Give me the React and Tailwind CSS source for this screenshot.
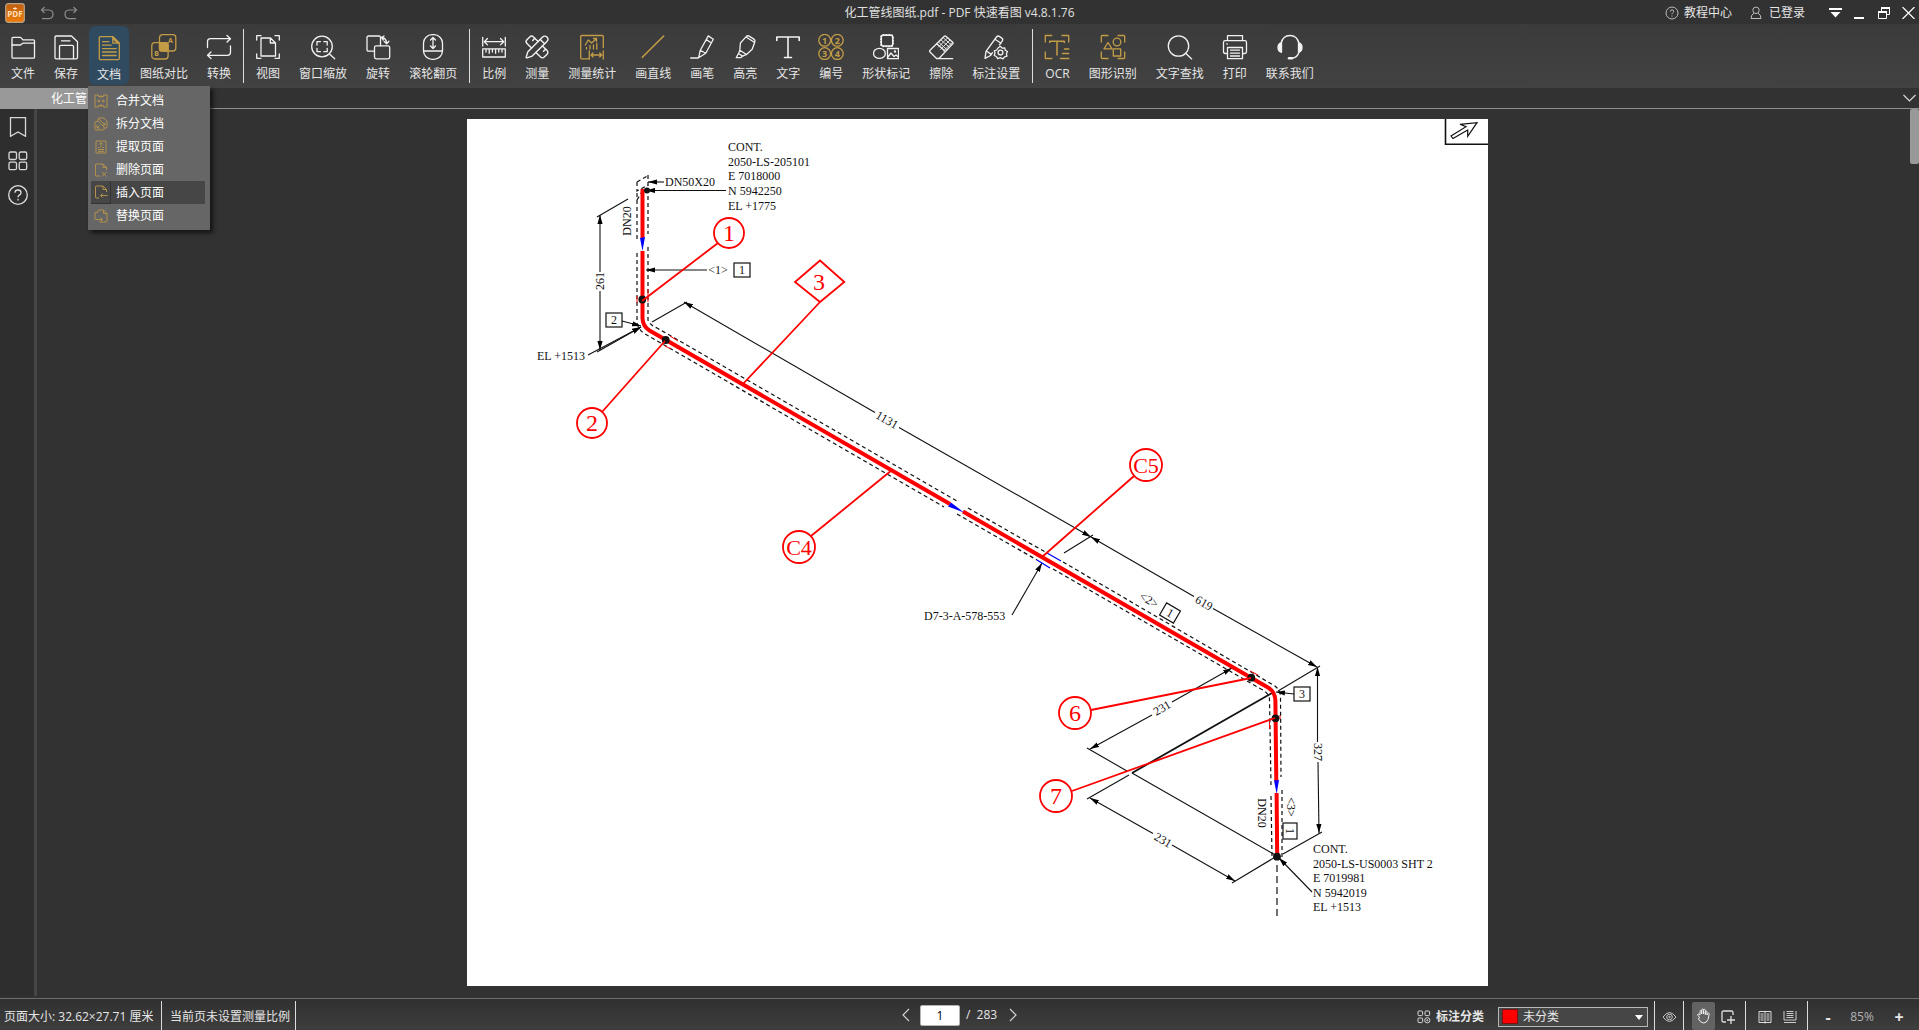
import React from "react";
import { PencilRuler } from "lucide-react";

const GOLD = "#c39c46";

function Icon({ children, color = "#f2f2f2" }) {
  return (
    <svg
      viewBox="0 0 26 26"
      className="h-[26px] w-[26px]"
      fill="none"
      stroke={color}
      strokeWidth="1.3"
      strokeLinecap="round"
      strokeLinejoin="round"
      aria-hidden="true"
    >
      {children}
    </svg>
  );
}

const icons = {
  folder: (
    <Icon>
      <path d="M2 23.2V4.3q0-1 1-1h7.2q.6 0 1 .6l1.6 2h10.700q1 0 1 1v16.300q0 1-1 1H3q-1 0-1-1z" />
      <path d="M2 11h8.500l2.300-1.800h11.700" />
    </Icon>
  ),
  save: (
    <Icon>
      <path d="M3.200 2H18.500l6 5.800V23.500q0 1.300-1.300 1.300H3.200q-1.200 0-1.200-1.200V3.200Q2 2 3.200 2z" />
      <path d="M6.500 24.500V12.500q0-1.200 1.200-1.200h11.600q1.200 0 1.200 1.200v12M8.500 6.800H17" />
    </Icon>
  ),
  doc: (
    <Icon color={GOLD}>
      <path d="M4.500 1.700H17l6.300 6.300v15.300q0 1.300-1.300 1.300H4.500q-1.200 0-1.200-1.200V3q0-1.300 1.200-1.300z" />
      <path d="M16.800 1.900v6.200h6.200zM17.500 4l4 4" />
      <path d="M6.500 6.700h6.300M6.500 10.200h8.700M6.500 13.600h13.700M6.500 17h13.700M6.500 20.500h13.700" />
    </Icon>
  ),
  compare: (
    <Icon color={GOLD}>
      <rect x="8.500" y=".7" width="16.300" height="16.300" rx="3" />
      <rect x=".8" y="8.700" width="16.300" height="16.300" rx="3" />
      <rect x="8.500" y="8.700" width="8.600" height="8.300" rx="2" fill={GOLD} />
      <text x="19.500" y="8.600" fontSize="7" fontWeight="700" textAnchor="middle" fill={GOLD} stroke="none">A</text>
      <text x="5.600" y="22" fontSize="7" fontWeight="700" textAnchor="middle" fill={GOLD} stroke="none">B</text>
    </Icon>
  ),
  convert: (
    <Icon>
      <path d="M1.500 13.500V7.700q0-3 3-3H24M21 1.500l3.500 3.200L21 8M24.500 12v6.300q0 3-3 3H2M5 18l-3.500 3.300L5 24.500" />
    </Icon>
  ),
  view: (
    <Icon>
      <path d="M1.700 6V1.700H6M20 1.700h4.300V6M24.300 20v4.300H20M6 24.300H1.700V20" />
      <path d="M6 4h9.500l5 5v13H6zM15.300 4.300V9h5" />
    </Icon>
  ),
  zoomWindow: (
    <Icon>
      <circle cx="12" cy="12.500" r="10.300" />
      <path d="M19.500 20l5.200 4.800M7 11V7.600h3.400M13.800 7.600h3.400V11M17.200 14.300v3.400h-3.400M10.400 17.700H7v-3.400" />
    </Icon>
  ),
  rotate: (
    <Icon>
      <path d="M9.500 17.200H3.600q-1.600 0-1.600-1.600V3.600Q2 2 3.600 2h10.300q1.600 0 1.600 1.600v8" />
      <rect x="9.500" y="11.800" width="15.200" height="13" rx="1.700" />
      <path d="M16.500 3.500q5 .5 5.200 6M19 2l-2.500 1.500L18.300 6M19.200 7.500l2.500 2.200 2.200-2.500" />
    </Icon>
  ),
  wheel: (
    <Icon>
      <rect x="3.500" y=".7" width="19" height="24.600" rx="8.500" />
      <path d="M3.500 17h19M13 3.500v11M10.500 6L13 3.500 15.500 6M10.500 12l2.500 2.500 2.500-2.500" />
    </Icon>
  ),
  ratio: (
    <Icon>
      <path d="M1.700 3.300V12M24.300 3.300V12M3.500 7.700h19M6.500 4.500L3.300 7.700l3.200 3.200M19.500 4.500l3.200 3.200-3.200 3.200" />
      <path d="M1.700 14.800h22.600v8.200H1.700zM5 15v3M8.200 15v4.300M11.400 15v3M14.600 15v4.300M17.800 15v3M21 15v3" />
    </Icon>
  ),
  measure: <PencilRuler className="h-[26px] w-[26px] text-[#f2f2f2]" strokeWidth={1.3} aria-hidden="true" />,
  stats: (
    <Icon color={GOLD}>
      <path d="M24.300 13.500V2.500q0-1-1-1H2.700q-1 0-1 1v21.300q0 1 1 1H10" />
      <path d="M6.300 11L9.300 6l3.300 3 4.700-4.300M14.500 4.500h3v3M7.500 13.500V15M11 11.500V15M14.500 11V15M17.800 9.500V15" />
      <path d="M10.300 17v8M24.300 17v8M12 21h10.700M14 19l-2 2 2 2M20.700 19l2 2-2 2" />
    </Icon>
  ),
  line: (
    <Icon color={GOLD}>
      <path d="M2.300 23.300L23.700 2" strokeWidth="1.600" />
    </Icon>
  ),
  pen: (
    <Icon>
      <path d="M1.700 24h7.500L16.800 19.200l7.500-14-5-3.300-8 14.300-1.600 7.500M11.300 16.200l5.400 3M17.200 5.600l5 3.200" />
    </Icon>
  ),
  highlight: (
    <Icon>
      <path d="M14.200 2.600q1.100-1.400 3-.5l4.700 3q1.500 1 .9 2.900l-2.600 7.200-5.700 5.300-6.700-4.200.6-7.300zM8 16.300l-1.500 3.200 4.200 2.600 3.700-1.700M6.500 19.500l-2.300 4.200h4.500l2-1.600M14 3l8.300 5.200" />
    </Icon>
  ),
  text: (
    <Icon>
      <path d="M1.800 6.500V3h22.400v3.500M13 3v20.300M9.500 23.500h7" strokeWidth="1.600" />
    </Icon>
  ),
  number: (
    <Icon color={GOLD}>
      {[[6.700, 6.300, 1], [19.300, 6.300, 2], [6.700, 19.600, 3], [19.300, 19.600, 4]].map(([x, y, n]) => (
        <g key={n}>
          <circle cx={x} cy={y} r="5.900" />
          <text x={x} y={y + 3.300} fontSize="9" fontWeight="700" textAnchor="middle" fill={GOLD} stroke="none">{n}</text>
        </g>
      ))}
    </Icon>
  ),
  shapes: (
    <Icon>
      <rect x="8.300" y="1.200" width="11.400" height="10.800" rx="2" strokeWidth="1.500" />
      <rect x="7.800" y=".7" width="12.400" height="11.800" rx="2.500" strokeWidth="1.500" strokeDasharray=".5 2.400" />
      <ellipse cx="6.400" cy="19.400" rx="5.900" ry="5" />
      <path d="M14.500 14.500h11v10.200h-11zM15 23l3-4 3 3.500 2-1.500 2.300 2" />
      <circle cx="22" cy="17.500" r=".6" />
    </Icon>
  ),
  eraser: (
    <Icon>
      <path d="M2 16.300L16.300 2.300q.8-.7 1.600 0l6.800 6q.8.800 0 1.600L11 24.500H8.500L2 18q-.8-.8 0-1.700zM9 24.700h15.700M8.700 9.800l8.800 7.800" />
      <path d="M11 8.500l7.800 7M13.300 6.200l8 7M15.500 4l8 7M19.500 4L10.500 13M22 6l-9.300 9.300M24.300 8.500L15.500 17" strokeWidth=".9" />
    </Icon>
  ),
  settings: (
    <Icon>
      <path d="M2 24.300l1-7L13.500 3q1.200-1.600 2.800-.6l2.500 1.700q1.600 1.200.5 2.800L16.500 10.800M2 24.300l5.500-2.800 2-2.800M3.300 17l5 3.400M12 5.200l6 4" />
      <path d="M17.300 12.300l1.800 1.800 2.500-.3.700 2.400 2.200 1.300-1.100 2.300.6 2.400-2.400.6-1.600 2-2.700-1.100-2.600 1-1.300-2.200-2.200-1 .8-2.400-.7-2.300 2.400-.8 1.300-2z" />
      <circle cx="17.500" cy="18.600" r="2.400" />
    </Icon>
  ),
  ocr: (
    <Icon color={GOLD}>
      <path d="M1.300 8.500v-7h7M17.500 1.500h7.200v7M1.300 17.500v7h7" strokeLinecap="butt" />
      <path d="M5.700 8.500V7.300h14.600v1.200M13 7.300V21M20.500 15h4.200M18.500 19.500h6.200M16.500 24.400h8.200" strokeWidth="1.500" />
    </Icon>
  ),
  recognise: (
    <Icon color={GOLD}>
      <path d="M1.300 8V2.500q0-1 1-1H8M18 1.500h5.700q1 0 1 1V8M24.700 18v5.500q0 1-1 1H18M8 24.500H2.300q-1 0-1-1V18" />
      <path d="M8 8.500l4 6.300H4zM13.300 14.800h7.400V22h-7.400z" />
      <circle cx="17" cy="8" r="3.800" />
    </Icon>
  ),
  search: (
    <Icon>
      <circle cx="11.500" cy="12" r="10.200" />
      <path d="M18.700 19.300l6 5.600" />
    </Icon>
  ),
  print: (
    <Icon>
      <path d="M5.500 6.500V1.700h15v4.800M5.500 19.500H3.300q-1.800 0-1.800-1.800V8.500q0-1.800 1.800-1.800h19.400q1.800 0 1.800 1.800v9.200q0 1.800-1.800 1.800h-2.200M5.500 13.500h15v11.200h-15zM8.500 16.200h9M8.500 19.200h9M8.500 22h9M4.800 10h.5" />
    </Icon>
  ),
  headset: (
    <Icon>
      <path d="M4 9.500q1.800-8 9-8t9 8M22 18q-1.500 5.500-7 6.200" />
      <path d="M4.500 8.500v9.800q-3.500-1-3.500-4.900t3.500-4.900zM21.500 8.500v9.800q3.500-1 3.500-4.900t-3.500-4.900z" fill="#f2f2f2" />
      <path d="M12 24.200h3" strokeWidth="2.500" />
    </Icon>
  ),
};

const groups = [
  [["文件", "folder"], ["保存", "save"], ["文档", "doc"], ["图纸对比", "compare"], ["转换", "convert"]],
  [["视图", "view"], ["窗口缩放", "zoomWindow"], ["旋转", "rotate"], ["滚轮翻页", "wheel"]],
  [
    ["比例", "ratio"], ["测量", "measure"], ["测量统计", "stats"], ["画直线", "line"], ["画笔", "pen"], ["高亮", "highlight"],
    ["文字", "text"], ["编号", "number"], ["形状标记", "shapes"], ["擦除", "eraser"], ["标注设置", "settings"],
  ],
  [["OCR", "ocr"], ["图形识别", "recognise"], ["文字查找", "search"], ["打印", "print"], ["联系我们", "headset"]],
];

const menuItems = [
  ["合并文档", "M4.500 1H1v4M9.500 1H13v4M4.500 13H1V9M9.500 13H13V9M7 1v3M7 10v3M1 5v4M13 5v4M3 7h3M8 7h3M4.500 5.500L6 7 4.500 8.500M9.500 5.500L8 7l1.500 1.500M4.500 1v1.500h5V1M4.500 13v-1.500h5V13"],
  ["拆分文档", "M4 4V2q0-1 1-1h5l3 3v6q0 1-1 1h-2M1 5.500q0-1 1-1h2.500L10 10v2q0 1-1 1H2q-1 0-1-1zM5 2l6 6M11 5.500V8H8.500M3 8v3h3M3 11l2.500-2.500"],
  ["提取页面", "M2 1h10v12H2zM7 2.500v5M5 4.500l2-2 2 2M4 7.500h1.500M8.500 7.500H10M4 9.500h6M4 11.300h6"],
  ["删除页面", "M6 13H2.500q-1 0-1-1V2q0-1 1-1H9l3.500 3.500V7M9 1v3.500h3.500M8 9l4.500 4.500M12.500 9L8 13.500"],
  ["插入页面", "M5 13H2.500q-1 0-1-1V2q0-1 1-1H9l3.500 3.500V7M9 1v3.500h3.500M13.500 10.500H6.500M8.500 8.500l-2 2 2 2"],
  ["替换页面", "M4 3.500V2q0-1 1-1h4.500L13 4.500V12q0 1-1 1H6.500q-1 0-1-1M3.500 3.500H1v6q0 1 1 1h6M6.500 8.500l2 2-2 2M9.500 1v3.500H13"],
];

function DocMenu() {
  return (
    <div
      role="menu"
      className="absolute top-[60px] -left-px z-20 flex w-[122px] flex-col bg-[#666666] py-[3px] pr-[5px] pl-[3px] shadow-[3px_3px_4px_rgba(0,0,0,0.6)]"
    >
      {menuItems.map(([label, d], i) => (
        <button
          key={label}
          role="menuitem"
          className={
            i === 4
              ? "flex h-[23px] items-center bg-[#464646] text-left text-white"
              : "flex h-[23px] items-center text-left text-white"
          }
        >
          <span
            className={
              i === 4
                ? "flex h-full w-5 items-center justify-center border-r border-b border-[#333333]"
                : "flex h-full w-5 items-center justify-center"
            }
          >
            <svg viewBox="0 0 14 14" className="h-3.5 w-3.5" fill="none" stroke="#b3914b" strokeWidth="1" aria-hidden="true">
              <path d={d} />
            </svg>
          </span>
          <span className="pl-[5px]">{label}</span>
        </button>
      ))}
    </div>
  );
}

function TitleBar() {
  return (
    <header className="grid h-6 grid-cols-[1fr_auto_1fr] items-center bg-[#323232] pt-px">
      <div className="flex items-center pl-[5px]">
        <svg viewBox="0 0 20 20" className="h-5 w-5" role="img" aria-label="PDF">
          <defs>
            <linearGradient id="logo" x1="0" y1="0" x2="0" y2="1">
              <stop offset="0" stopColor="#c05f10" />
              <stop offset="1" stopColor="#ee7c0a" />
            </linearGradient>
          </defs>
          <rect x=".7" y=".7" width="18.600" height="18.600" rx="2.500" fill="url(#logo)" stroke="#b9a389" strokeWidth="1.200" />
          <text x="10" y="14" fontSize="8" fontWeight="700" textAnchor="middle" fill="#ffe0bd">PDF</text>
          <path d="M10 4v3M8 5.500h4" stroke="#ffe0bd" />
        </svg>
        <button aria-label="撤销" className="ml-[15px]">
          <svg viewBox="0 0 14 14" className="h-3.5 w-3.5" fill="none" stroke="#8c8c8c" strokeWidth="1.200">
            <path d="M4.500 1L1.500 4l3 3M1.500 4H9q4 .2 4 4.300T9 12.700H2" />
          </svg>
        </button>
        <button aria-label="重做" className="ml-2.5">
          <svg viewBox="0 0 14 14" className="h-3.5 w-3.5" fill="none" stroke="#8c8c8c" strokeWidth="1.200">
            <path d="M9.500 1l3 3-3 3M12.500 4H5Q1 4.200 1 8.300t4 4.400h7" />
          </svg>
        </button>
      </div>
      <h1 className="text-[#e0e0e0]">化工管线图纸.pdf - PDF 快速看图 v4.8.1.76</h1>
      <div className="flex items-center justify-end pr-1 text-[#e6e6e6]">
        <button className="mr-[18px] flex items-center gap-[5px]">
          <svg viewBox="0 0 14 14" className="h-3.5 w-3.5" fill="none" stroke="#bdbdbd" aria-hidden="true">
            <circle cx="7" cy="7" r="6" />
            <path d="M5.300 5.600q0-1.800 1.700-1.800t1.700 1.600q0 1-1 1.600-.7.400-.7 1.300M7 9.600v1" />
          </svg>
          教程中心
        </button>
        <button className="mr-6 flex items-center gap-[7px]">
          <svg viewBox="0 0 12 14" className="h-3.5 w-3" fill="none" stroke="#bdbdbd" aria-hidden="true">
            <circle cx="6" cy="4.300" r="3.200" />
            <path d="M4 7.200Q1 8.500 1 12.500h10q0-4-3-5.300" />
          </svg>
          已登录
        </button>
        <button aria-label="菜单" className="mr-3">
          <svg viewBox="0 0 13 12" className="h-3 w-[13px]" fill="#ffffff"><path d="M0 1h13v2H0zM1.500 5h10L6.500 10.500z" /></svg>
        </button>
        <button aria-label="最小化" className="mr-3.5">
          <svg viewBox="0 0 10 12" className="h-3 w-2.5" fill="#ffffff"><path d="M0 10h10v2H0z" /></svg>
        </button>
        <button aria-label="还原" className="mr-3">
          <svg viewBox="0 0 12 12" className="h-3 w-3" fill="none" stroke="#ffffff">
            <path d="M3.500 4V1h8v6.500H9M.5 5h8v6.500h-8z" /><path d="M3 1h9M0 5h9" strokeWidth="2" />
          </svg>
        </button>
        <button aria-label="关闭">
          <svg viewBox="0 0 13 12" className="h-3 w-[13px]" fill="none" stroke="#ffffff" strokeWidth="1.200"><path d="M.5 0l12 12M12.500 0L.5 12" /></svg>
        </button>
      </div>
    </header>
  );
}

function ToolButton({ label, icon }) {
  const active = icon === "doc";
  return (
    <div className="relative">
      <button
        aria-haspopup={active ? "menu" : undefined}
        className={
          active
            ? "flex h-[59px] flex-col items-center rounded-md bg-[#304a5f] px-2 pt-[9px] text-[#e6e6e6]"
            : "flex h-[59px] flex-col items-center px-2 pt-2 text-[#e6e6e6]"
        }
      >
        <span className="-mx-2">{icons[icon]}</span>
        <span className="mt-1.5 leading-4 whitespace-nowrap">{label}</span>
      </button>
      {active && <DocMenu />}
    </div>
  );
}

function Toolbar() {
  return (
    <nav className="flex h-16 bg-[linear-gradient(#3b3b3b,#424242)] pt-0.5 pl-[3px]">
      {groups.map((group, g) => (
        <React.Fragment key={g}>
          {g > 0 && <div className="mx-1 mt-[3px] h-[54px] w-px bg-[#dcdcdc]" />}
          <div className="flex gap-[3px]">
            {group.map(([label, icon]) => (
              <ToolButton key={label} label={label} icon={icon} />
            ))}
          </div>
        </React.Fragment>
      ))}
    </nav>
  );
}

const CadText = ({ x, y, children, rotate = 0, anchor = "start", size = 12, fill = "#111111" }) => (
  <text
    x={x}
    y={y}
    fontSize={size}
    fill={fill}
    textAnchor={anchor}
    transform={rotate ? `rotate(${rotate} ${x} ${y})` : undefined}
    dominantBaseline={anchor === "middle" ? "central" : undefined}
  >
    {children}
  </text>
);

const balloons = [
  ["1", 729, 233, 15, 718, 243, 642, 301],
  ["2", 592, 423, 15, 602, 412, 665, 341],
  ["C4", 799, 547, 16, 811, 536, 892, 470],
  ["C5", 1146, 465, 16, 1134, 476, 1042, 557],
  ["6", 1075, 713, 16, 1091, 710, 1251, 678],
  ["7", 1056, 796, 16, 1072, 791, 1275, 718],
];

/* each line ends in an arrowhead at its second point */
const arrowLines = [
  "M600 272V215",
  "M600 291v59",
  "M588 355l53-28",
  "M597 352l44-25",
  "M622 321l19 5",
  "M707 270h-61",
  "M664 182h-16",
  "M726 190.500h-80",
  "M875 412.500L684 302",
  "M899 427.500L1091 537",
  "M1194 596.500L1091 537",
  "M1213 608.500L1317 667",
  "M1172 702l60-34",
  "M1152 715L1090 749",
  "M1153 833.500L1090 798",
  "M1172 845l63 36",
  "M1317.500 742v-75",
  "M1318 762l1 71",
  "M1012 615l30-52",
  "M1294 694l-18-2",
  "M1312 892l-33-34",
];

const TagBox = ({ x, y, n, rotate = 0 }) => (
  <g transform={`translate(${x} ${y}) rotate(${rotate})`}>
    <rect x="-8" y="-7" width="16" height="14" fill="none" stroke="#111111" strokeWidth="1.200" />
    <text x="0" y="0" fontSize="12" textAnchor="middle" dominantBaseline="central" fill="#111111">{n}</text>
  </g>
);

function Drawing() {
  return (
    <svg
      viewBox="467 119 1021 867"
      className="mx-auto block w-full max-w-[1021px] bg-white font-['Liberation_Serif','Noto_Sans_CJK_SC',serif]"
      role="img"
      aria-label="化工管线图纸 第 1 页"
    >
      <defs>
        <marker id="arrow" viewBox="0 0 9 6" refX="9" refY="3" markerWidth="9" markerHeight="6" markerUnits="userSpaceOnUse" orient="auto">
          <path d="M0 .4L9 3 0 5.600z" fill="#000000" />
        </marker>
      </defs>

      {/* north arrow */}
      <path d="M1445.500 119v25.300H1488" fill="none" stroke="#111111" strokeWidth="1.600" />
      <path d="M1451 136l15-9.300-6-2.400 17-1.600-9.300 13.600v-6.300L1453 138.500z" fill="none" stroke="#111111" strokeWidth="1.200" />

      {/* insulation outline */}
      <g fill="none" stroke="#111111" strokeWidth="1.200" strokeDasharray="4 3">
        <path d="M637 193v47M637 253v70q2 8 9 11.500L944 507" />
        <path d="M648 175v59M648 247v73q2 5 9 8L957 501" />
        <path d="M637 182l11-6.500M637 182v9l11-6M637 200l6-10" />
        <path d="M957 514l80 46M1053 569l208 120q8 4 8.500 10L1271 785M1271 796l1 61" />
        <path d="M968 508l79 45M1063 562l212 124q5 4 5.500 10L1281 777M1282 790v67" />
        <path d="M1277 865v52" strokeDasharray="7 4" />
      </g>

      {/* dimensions and leaders */}
      <g fill="none" stroke="#111111" strokeWidth="1.100">
        {arrowLines.map((d) => (
          <path key={d} d={d} markerEnd="url(#arrow)" />
        ))}
        <path d="M597 217l31-18M652 322l35-20M1064 553l29-18M1278 691l42-25" />
        <path d="M1087 748l40 23M1132 773l145 83M1087 799l42-24M1232 883l45-27M1283 854l39-22" />
        <path d="M1132 773l140-80" strokeWidth="1.800" />
      </g>

      {/* pipe run */}
      <path
        d="M642.500 189v49M642.500 251v67q0 8 7 12.500L950 504M963 511.500L1268 687.500q7 4 7.400 13L1276.300 781M1276.600 793l.6 64"
        fill="none"
        stroke="#ff0000"
        strokeWidth="4"
      />
      <g fill="#0000ff">
        <path d="M640 238l5-1-2.500 14zM951 502.500l-3 4 16 6zM1274 780.500l5-.5-2.300 14z" />
        <path d="M1047 553l14 8M1037 560l13 8" stroke="#0000ff" strokeWidth="1.300" />
      </g>
      <path d="M648 289v13M637 296v7M670 336l8 5M665 346l6 3M1250 671l8 4M1280 715v4M1269.500 722v7" stroke="#ff0000" strokeWidth="1" />
      <g fill="#111111">
        <circle cx="642.300" cy="299.500" r="3.900" />
        <circle cx="665.700" cy="340" r="3.900" />
        <circle cx="1251.300" cy="677.700" r="3.900" />
        <circle cx="1275.500" cy="718.300" r="3.900" />
        <circle cx="1277" cy="856.700" r="3.900" />
        <circle cx="647" cy="190.500" r="3" />
      </g>

      <g fill="none" stroke="#ff0000" strokeWidth="1.800">
        {balloons.map(([n, cx, cy, r, x1, y1, x2, y2]) => (
          <g key={n}>
            <circle cx={cx} cy={cy} r={r} />
            <path d={`M${x1} ${y1}L${x2} ${y2}`} />
          </g>
        ))}
        <path d="M820 260.500l24.300 21.500L820 302l-25-20zM820 302l-78 83" />
      </g>
      {balloons.map(([n, cx, cy]) => (
        <CadText key={n} x={cx} y={cy} anchor="middle" size={n.length > 1 ? 22 : 24} fill="#ff0000">{n}</CadText>
      ))}
      <CadText x={819} y={282} anchor="middle" size={24} fill="#ff0000">3</CadText>

      {["CONT.", "2050-LS-205101", "E 7018000", "N 5942250", "EL +1775"].map((t, i) => (
        <CadText key={t} x={728} y={151 + Math.round(i * 14.700)}>{t}</CadText>
      ))}
      {["CONT.", "2050-LS-US0003 SHT 2", "E 7019981", "N 5942019", "EL +1513"].map((t, i) => (
        <CadText key={t} x={1313} y={853 + Math.round(i * 14.600)}>{t}</CadText>
      ))}
      <CadText x={665} y={186}>DN50X20</CadText>
      <CadText x={537} y={360}>EL +1513</CadText>
      <CadText x={924} y={620}>D7-3-A-578-553</CadText>
      <CadText x={627} y={221} rotate={-90} anchor="middle">DN20</CadText>
      <CadText x={600} y={281} rotate={-90} anchor="middle">261</CadText>
      <CadText x={718} y={270} anchor="middle">&lt;1&gt;</CadText>
      <CadText x={887} y={420} rotate={30} anchor="middle">1131</CadText>
      <CadText x={1204} y={603} rotate={30} anchor="middle">619</CadText>
      <CadText x={1149} y={600} rotate={30} anchor="middle">&lt;2&gt;</CadText>
      <CadText x={1162} y={708} rotate={-30} anchor="middle">231</CadText>
      <CadText x={1163} y={840} rotate={30} anchor="middle">231</CadText>
      <CadText x={1318} y={752} rotate={90} anchor="middle">327</CadText>
      <CadText x={1291} y={807} rotate={90} anchor="middle">&lt;3&gt;</CadText>
      <CadText x={1262} y={813} rotate={90} anchor="middle">DN20</CadText>
      <TagBox x={742} y={270} n="1" />
      <TagBox x={614} y={320} n="2" />
      <TagBox x={1170} y={613} n="1" rotate={30} />
      <TagBox x={1302} y={694} n="3" />
      <TagBox x={1290} y={831} n="1" rotate={90} />
    </svg>
  );
}

function Sidebar() {
  return (
    <aside className="mb-0.5 flex w-[37px] flex-col items-center gap-3.5 border-r-[3px] border-[#464646] bg-[#2e2e2e] pt-2 pl-px">
      <button aria-label="书签">
        <svg viewBox="0 0 20 20" className="h-5 w-5" fill="none" stroke="#d8d8d8" strokeWidth="1.300"><path d="M2.500 .7h15v18.600L10 15l-7.500 4.300z" /></svg>
      </button>
      <button aria-label="缩略图">
        <svg viewBox="0 0 20 20" className="h-5 w-5" fill="none" stroke="#d8d8d8" strokeWidth="1.300">
          <rect x="1" y="1" width="7.500" height="7.500" rx="1.500" />
          <rect x="11.200" y="1" width="7.500" height="7.500" rx="1.500" />
          <rect x="1" y="11.200" width="7.500" height="7.500" rx="1.500" />
          <rect x="11.200" y="11.200" width="7.500" height="7.500" rx="1.500" />
        </svg>
      </button>
      <button aria-label="帮助">
        <svg viewBox="0 0 20 20" className="h-5 w-5" fill="none" stroke="#e0e0e0" strokeWidth="1.300">
          <circle cx="10" cy="10" r="9.300" />
          <path d="M7 7.800Q7 5 10 5t3 2.700q0 1.500-1.700 2.400Q10 10.800 10 12.300M10 13.800v1.700" />
        </svg>
      </button>
    </aside>
  );
}

const Rule = () => <div className="mt-0.5 w-px self-stretch bg-[#dcdcdc]" />;

function StatusBar() {
  return (
    <footer className="grid h-8 grid-cols-[1fr_auto_1fr] items-center border-t border-[#6e6e6e] bg-[linear-gradient(#303030,#3e3e3e)] text-[#e6e6e6]">
      <div className="flex h-full items-center">
        <span className="flex w-[161px] pt-1 pl-1 whitespace-nowrap">页面大小: 32.62×27.71 厘米</span>
        <Rule />
        <span className="pt-1 pr-[5px] pl-2">当前页未设置测量比例</span>
        <Rule />
      </div>
      <div className="flex items-center pt-px">
        <button aria-label="上一页">
          <svg viewBox="0 0 8 14" className="h-3.5 w-2" fill="none" stroke="#d0d0d0" strokeWidth="1.200"><path d="M7 1L1 7l6 6" /></svg>
        </button>
        <input
          aria-label="页码"
          defaultValue="1"
          className="ml-2.5 h-[21px] w-10 rounded-xs border border-[#b5b5b5] bg-white text-center text-black"
        />
        <span className="ml-1.5 whitespace-pre">/  283</span>
        <button aria-label="下一页" className="ml-3">
          <svg viewBox="0 0 8 14" className="h-3.5 w-2" fill="none" stroke="#d0d0d0" strokeWidth="1.200"><path d="M1 1l6 6-6 6" /></svg>
        </button>
      </div>
      <div className="flex h-full items-center justify-end">
        <label htmlFor="category" className="mr-3.5 flex items-center gap-[5px] pt-1 font-bold">
          <svg viewBox="0 0 14 14" className="h-3.5 w-3.5" fill="none" stroke="#d8d8d8" aria-hidden="true">
            <rect x="1" y="1" width="4.600" height="4.600" rx="1" />
            <rect x="8" y="1" width="4.600" height="4.600" rx="1" />
            <rect x="1" y="8" width="4.600" height="4.600" rx="1" />
            <circle cx="10.300" cy="10.300" r="2.600" />
            <circle cx="10.300" cy="10.300" r=".6" />
          </svg>
          标注分类
        </label>
        <div className="relative mt-1 flex h-5 w-[150px] items-center border border-[#b8b8b8] bg-[#464646] pl-[3px]">
          <span className="h-[15px] w-4 border border-[#7a1010] bg-[#ff0000]" />
          <select id="category" className="h-full flex-1 appearance-none bg-transparent pl-[5px] leading-4 outline-none">
            <option>未分类</option>
          </select>
          <svg viewBox="0 0 8 5" className="pointer-events-none absolute top-[7px] right-1 h-[5px] w-2" fill="#ffffff" aria-hidden="true"><path d="M0 0h8L4 5z" /></svg>
        </div>
        <span className="w-1.5" />
        <Rule />
        <button aria-label="显示标注" className="mr-1.5 ml-[7px] pt-1">
          <svg viewBox="0 0 15 12" className="h-3 w-[15px]" fill="none" stroke="#c8c8c8">
            <path d="M1 6q6.500-9 13 0-6.500 9-13 0z" /><circle cx="7.500" cy="6" r="2.800" /><circle cx="7.500" cy="6" r=".8" />
          </svg>
        </button>
        <Rule />
        <button aria-label="手形工具" className="mt-[3px] ml-2 flex w-[23px] items-center justify-center self-stretch rounded-xs bg-[#636363]">
          <svg viewBox="0 0 15 16" className="h-4 w-[15px]" fill="none" stroke="#eeeeee" strokeLinecap="round">
            <path d="M3.500 9.500L1.800 7.200Q1.300 6.200 2.300 6q.7-.1 1.700 1V3.500q0-1 .8-1t.9 1V6V2q0-1 .9-1t.9 1v4V2.300q0-1 .9-1t.9 1V6.500 4q0-.9.800-.9t.9.900v3l.7-1.400q.6-.8 1.200-.3t.2 1.400L12 11.500Q10.500 15 7.500 15t-5-4z" />
          </svg>
        </button>
        <button aria-label="框选工具" className="mr-2.5 ml-1.5 pt-1">
          <svg viewBox="0 0 14 14" className="h-3.5 w-3.5" fill="none" stroke="#e0e0e0" strokeWidth="1.300">
            <path d="M5 12H2.500Q1 12 1 10.500v-8Q1 1 2.500 1h8Q12 1 12 2.500V5M10 6v8M6 10h8" />
          </svg>
        </button>
        <Rule />
        <button aria-label="双页" className="ml-3 pt-1">
          <svg viewBox="0 0 14 14" className="h-3.5 w-3.5" fill="none" stroke="#dcdcdc">
            <path d="M1 1.500h12v11H1zM7 1.500v12M2.500 4h3M2.500 6h3M2.500 8h3M2.500 10h3M8.500 4h3M8.500 6h3M8.500 8h3M8.500 10h3" />
          </svg>
        </button>
        <button aria-label="适合宽度" className="mr-2.5 ml-[11px] pt-1">
          <svg viewBox="0 0 14 14" className="h-3.5 w-3.5" fill="none" stroke="#cccccc">
            <path d="M1 1v9M13 1v9M3.500 1.500h7M3.500 3.500h7M3.500 5.500h7M3.500 7.500h7M1 10h12M1 12.500h12" />
          </svg>
        </button>
        <Rule />
        <button aria-label="缩小" className="ml-[15px] w-2.5 pt-1 text-base leading-5 font-bold">-</button>
        <span className="ml-[15px] w-7 pt-1 text-center text-[#b4b4b4]">85%</span>
        <button aria-label="放大" className="mr-3.5 ml-[17px] w-3 pt-1 text-base leading-5 font-bold">+</button>
      </div>
    </footer>
  );
}

export default function App() {
  return (
    <div className="flex h-screen flex-col overflow-hidden bg-[#323232] font-['Open_Sans','Noto_Sans_CJK_SC',sans-serif] text-xs">
      <TitleBar />
      <Toolbar />
      <div className="flex h-[21px] items-center justify-between border-b border-[#8f8f8f]">
        <button
          aria-label="化工管线图纸.pdf"
          className="-mb-px h-[21px] w-[200px] bg-[#999999] pl-[51px] text-left leading-[21px] text-white"
        >
          <span className="block w-9 overflow-hidden">化工管</span>
        </button>
        <button aria-label="标签列表" className="pr-[3px]">
          <svg viewBox="0 0 13 8" className="h-2 w-[13px]" fill="none" stroke="#d8d8d8" strokeWidth="1.200"><path d="M.5 1l6 6 6-6" /></svg>
        </button>
      </div>
      <div className="flex min-h-0 flex-1">
        <Sidebar />
        <main className="relative min-w-0 flex-1 overflow-hidden pt-2.5 pr-px">
          <Drawing />
          <div className="absolute top-0 right-0 h-[55px] w-[9px] rounded-xs bg-[#999999]" />
        </main>
      </div>
      <StatusBar />
    </div>
  );
}
